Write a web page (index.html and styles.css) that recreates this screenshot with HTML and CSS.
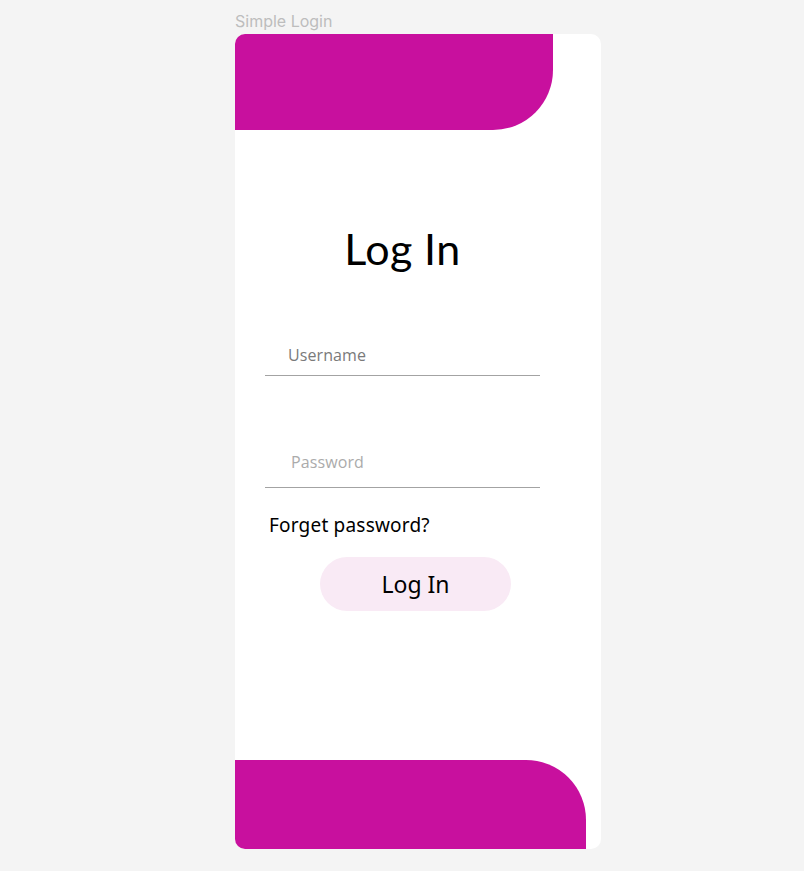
FILE: index.html
```html
<!DOCTYPE html>
<html lang="en">
<head>
<meta charset="utf-8">
<title>Simple Login</title>
<link rel="stylesheet" href="styles.css">
</head>
<body>
  <div class="frame">
    <div class="frame-label">Simple Login</div>
    <div class="card">
      <div class="band band-top"></div>
      <form class="form">
        <h1 class="title">Log In</h1>
        <input class="field field-user" type="text" placeholder="Username">
        <input class="field field-pass" type="password" placeholder="Password">
        <a class="forgot" href="#">Forget password?</a>
        <button class="btn" type="button">Log In</button>
      </form>
      <div class="band band-bottom"></div>
    </div>
  </div>
</body>
</html>
```

FILE: styles.css
```css
* { box-sizing: border-box; }

html, body {
  margin: 0;
  padding: 0;
  background: #f4f4f4;
}

.frame {
  padding: 11px 0 0 235px;
}

.frame-label {
  font-family: Inter, "Liberation Sans", sans-serif;
  font-size: 16px;
  line-height: 20px;
  color: #bdbdbd;
  margin-bottom: 3px;
}

.card {
  width: 366px;
  height: 815px;
  background: #ffffff;
  border-radius: 10px;
  overflow: hidden;
  display: flex;
  flex-direction: column;
}

.band {
  background: #c8109e;
  flex: none;
}

.band-top {
  width: 318px;
  height: 96px;
  border-bottom-right-radius: 60px;
}

.band-bottom {
  width: 351px;
  height: 89px;
  border-top-right-radius: 60px;
  margin-top: auto;
}

.form {
  width: 275px;
  margin: 0 0 0 30px;
  display: flex;
  flex-direction: column;
}

.title {
  margin: 93px 0 0;
  font-family: Lato, sans-serif;
  font-weight: 400;
  font-size: 43px;
  line-height: 52px;
  letter-spacing: 0.4px;
  text-align: center;
  color: #000;
}

.field {
  display: block;
  width: 275px;
  border: none;
  border-bottom: 1px solid #a3a3a3;
  outline: none;
  background: transparent;
  font-family: "Open Sans", sans-serif;
  font-size: 16px;
  letter-spacing: 0.1px;
  color: #333;
  margin: 0;
}

.field-user {
  margin-top: 61px;
  height: 40px;
  padding: 0 0 2px 23px;
}

.field-user::placeholder { color: #7a7a7a; }

.field-pass {
  margin-top: 62px;
  height: 50px;
  padding: 0 0 2px 26px;
}

.field-pass::placeholder { color: #ababab; }

.forgot {
  margin: 25px 0 0 4px;
  font-family: "Noto Sans", sans-serif;
  font-size: 19px;
  line-height: 24px;
  letter-spacing: 0.2px;
  color: #000;
  text-decoration: none;
}

.btn {
  margin: 20px 0 0 55px;
  width: 191px;
  height: 54px;
  border: none;
  border-radius: 27px;
  background: #f9eaf5;
  font-family: "Noto Sans", sans-serif;
  font-size: 23px;
  color: #000;
  padding: 0;
  cursor: pointer;
}
```
